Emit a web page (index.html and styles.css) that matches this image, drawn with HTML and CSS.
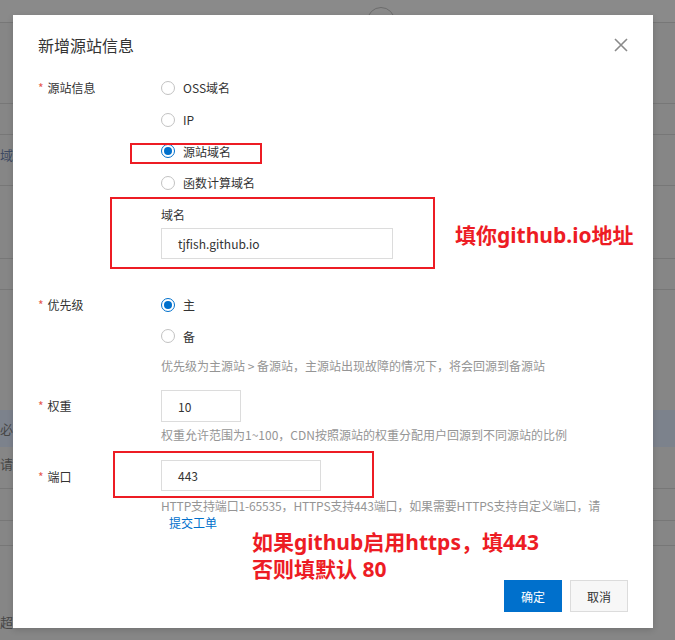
FILE: index.html
```html
<!DOCTYPE html>
<html lang="zh-CN">
<head>
<meta charset="utf-8">
<title>新增源站信息</title>
<link rel="stylesheet" href="styles.css">
</head>
<body>
<div class="page">
  <div class="topbar"><span class="avatar"></span></div>
  <div class="row h80"></div>
  <div class="row h30"></div>
  <div class="row h50"><span class="cut cut-blue">域名</span></div>
  <div class="row h72"></div>
  <div class="row h30"></div>
  <div class="row h120 noline"></div>
  <div class="row hl"><span class="cut">必须</span></div>
  <div class="row h41"><span class="cut">请求</span></div>
  <div class="row h31"></div>
  <div class="row h24"></div>
  <div class="row last noline"><span class="cut">超过</span></div>
</div>

<div class="dialog">
  <div class="dlg-head">
    <h2 class="dlg-title">新增源站信息</h2>
    <button class="close" type="button" aria-label="关闭">
      <svg width="14" height="14" viewBox="0 0 14 14"><path d="M1 1L13 13M13 1L1 13" stroke="#8a8a8a" stroke-width="1.6" fill="none"/></svg>
    </button>
  </div>

  <div class="dlg-body">
    <div class="field">
      <div class="label radio-label"><i class="req">*</i>源站信息</div>
      <div class="control">
        <div class="radios">
          <div class="radio"><span class="dot"></span>OSS域名</div>
          <div class="radio"><span class="dot"></span>IP</div>
          <div class="radio"><span class="dot on"></span>源站域名</div>
          <div class="radio"><span class="dot"></span>函数计算域名</div>
        </div>
        <div class="sub-label">域名</div>
        <div class="input domain">tjfish.github.io</div>
      </div>
    </div>

    <div class="field f-priority">
      <div class="label radio-label"><i class="req">*</i>优先级</div>
      <div class="control">
        <div class="radios">
          <div class="radio"><span class="dot on"></span>主</div>
          <div class="radio"><span class="dot"></span>备</div>
        </div>
        <div class="help h-priority">优先级为主源站 &gt; 备源站，主源站出现故障的情况下，将会回源到备源站</div>
      </div>
    </div>

    <div class="field f-weight">
      <div class="label input-label"><i class="req">*</i>权重</div>
      <div class="control">
        <div class="input small">10</div>
        <div class="help h-weight">权重允许范围为1~100，CDN按照源站的权重分配用户回源到不同源站的比例</div>
      </div>
    </div>

    <div class="field f-port">
      <div class="label port-label"><i class="req">*</i>端口</div>
      <div class="control">
        <div class="input port">443</div>
        <div class="help h-port">HTTP支持端口1-65535，HTTPS支持443端口，如果需要HTTPS支持自定义端口，请</div>
        <a class="link" href="#">提交工单</a>
      </div>
    </div>
  </div>

  <div class="dlg-foot">
    <button class="btn primary" type="button">确定</button>
    <button class="btn" type="button">取消</button>
  </div>

  <div class="mark mark-radio"></div>
  <div class="mark mark-domain"></div>
  <div class="mark mark-port"></div>
  <div class="note note-domain">填你github.io地址</div>
  <div class="note note-port">如果github启用https，填443<br>否则填默认 80</div>
</div>
</body>
</html>
```

FILE: styles.css
```css
* { box-sizing: border-box; }

html, body {
  margin: 0;
  padding: 0;
}

body {
  width: 675px;
  height: 640px;
  overflow: hidden;
  background: #868686;
  font-family: "Noto Sans CJK SC", "Noto Sans", sans-serif;
  font-size: 12px;
  color: #333;
  position: relative;
}

/* underlying page (dimmed) */
.page {
  display: flex;
  flex-direction: column;
}

.topbar {
  height: 23px;
  background: #8a8a8a;
  border-bottom: 1px solid #777;
  display: flex;
}

.avatar {
  width: 28px;
  height: 28px;
  margin: 7px 0 0 367px;
  border: 1px solid #6c6c6c;
  border-radius: 50%;
}

.row {
  border-bottom: 1px solid #777;
  display: flex;
  align-items: center;
  font-size: 13px;
  color: #474747;
}
.row.noline { border-bottom: none; }
.h80 { height: 81px; }
.h30 { height: 31px; }
.h50 { height: 51px; align-items: flex-start; padding-top: 10px; }
.h72 { height: 73px; }
.h120 { height: 120px; }
.hl { height: 37px; background: #7c828c; border-bottom: none; }
.h41 { height: 42px; align-items: flex-start; padding-top: 7px; }
.h31 { height: 32px; }
.h24 { height: 25px; }
.last { height: 100px; align-items: flex-end; padding-bottom: 15px; }

.cut { margin-left: 0; }
.cut-blue { color: #3d4a63; }

/* dialog */
.dialog {
  position: absolute;
  left: 13px;
  top: 15px;
  width: 640px;
  height: 613px;
  background: #fff;
  display: flex;
  flex-direction: column;
  box-shadow: 0 2px 6px rgba(0, 0, 0, 0.15);
}

.dlg-head {
  display: flex;
  justify-content: space-between;
  align-items: center;
  padding: 18px 25px 0 25px;
}

.dlg-title {
  margin: 0;
  font-size: 16px;
  line-height: 24px;
  font-weight: normal;
  color: #333;
}

.close {
  border: none;
  background: none;
  padding: 0;
  width: 14px;
  height: 14px;
  display: flex;
}

.dlg-body {
  flex: 1;
  padding: 15px 25px 0 25px;
}

.field {
  display: grid;
  grid-template-columns: 123px 1fr;
}

.label {
  color: #333;
  white-space: nowrap;
}
.radio-label { line-height: 31.7px; }
.input-label { line-height: 32px; }
.port-label { line-height: 33px; }

.req {
  font-style: normal;
  color: #e65a4f;
  margin-right: 4px;
}

.radios {
  display: flex;
  flex-direction: column;
}

.radio {
  height: 31.7px;
  display: flex;
  align-items: center;
  color: #333;
}

.dot {
  width: 14px;
  height: 14px;
  border: 1px solid #c2c2c2;
  border-radius: 50%;
  margin-right: 8px;
  display: flex;
  align-items: center;
  justify-content: center;
  background: #fff;
}
.dot.on { border-color: #0070cc; }
.dot.on::after {
  content: "";
  width: 8px;
  height: 8px;
  border-radius: 50%;
  background: #0070cc;
}

.sub-label {
  margin-top: 7px;
  line-height: 18px;
  color: #333;
}

.input {
  border: 1px solid #dcdcdc;
  padding-left: 16px;
  display: flex;
  align-items: center;
  color: #333;
}
.domain { margin-top: 4px; width: 232px; height: 31px; }
.small { width: 80px; height: 32px; }
.port { width: 160px; height: 31px; }

.f-priority { margin-top: 30px; }
.f-weight { margin-top: 15px; }
.f-port { margin-top: 16px; }

.help {
  color: #959595;
  line-height: 18px;
  white-space: nowrap;
}
.h-priority { margin-top: 5px; }
.h-weight { margin-top: 4px; }
.h-port { margin-top: 6px; line-height: 17px; letter-spacing: -0.15px; }

.link {
  display: block;
  margin-left: 8px;
  line-height: 17px;
  color: #0070cc;
  text-decoration: none;
}

.dlg-foot {
  display: flex;
  justify-content: flex-end;
  gap: 8px;
  padding: 0 25px 16px 0;
}

.btn {
  width: 58px;
  height: 32px;
  border: 1px solid #dcdcdc;
  background: #f7f7f7;
  color: #333;
  font-family: inherit;
  font-size: 12px;
  padding: 0;
}
.btn.primary {
  background: #0070cc;
  border-color: #0070cc;
  color: #fff;
}

/* red annotation overlay */
.mark {
  position: absolute;
  border: 2px solid #ed1c24;
}
.mark-radio { left: 117px; top: 128px; width: 132px; height: 21px; }
.mark-domain { left: 97px; top: 182px; width: 325px; height: 72px; }
.mark-port { left: 100px; top: 436px; width: 261px; height: 47px; }

.note {
  position: absolute;
  color: #ed1c24;
  font-weight: bold;
  font-size: 21px;
  white-space: nowrap;
  font-family: "Noto Sans", "Noto Sans CJK SC", sans-serif;
}
.note-domain { left: 442px; top: 206px; line-height: 28px; }
.note-port { left: 239px; top: 514px; line-height: 27px; }
```
